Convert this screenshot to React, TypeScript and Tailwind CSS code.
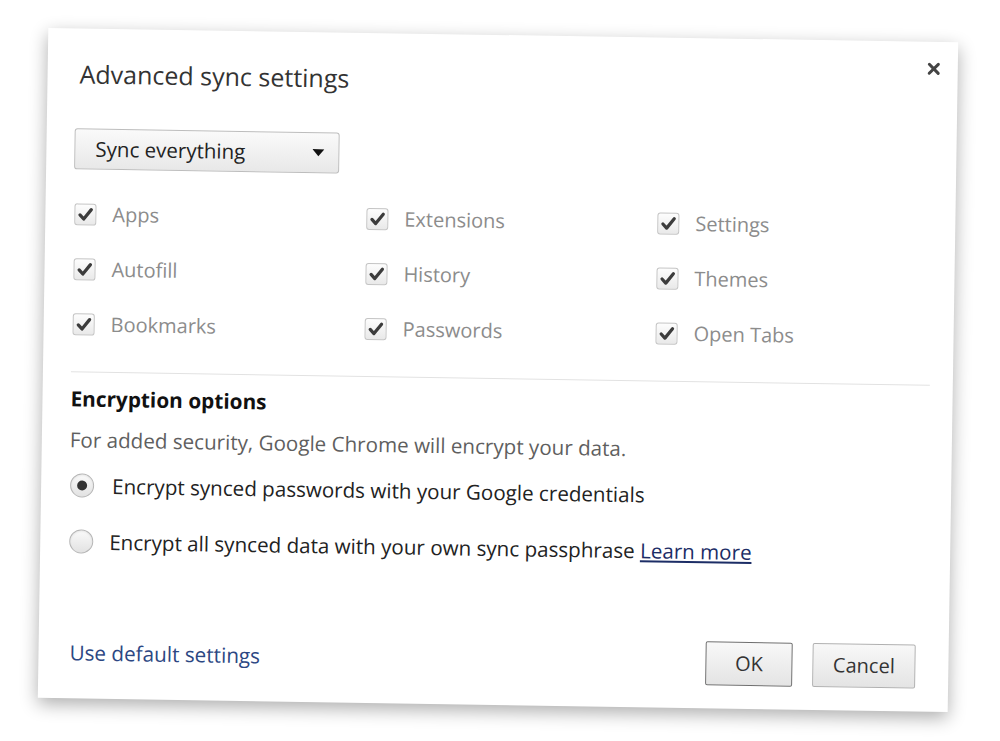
import { X } from "lucide-react"

const font = { fontFamily: '"Open Sans", "Noto Sans", sans-serif' }

const columns = [
  ["Apps", "Autofill", "Bookmarks"],
  ["Extensions", "History", "Passwords"],
  ["Settings", "Themes", "Open Tabs"],
]

function CheckBox() {
  return (
    <span className="flex h-[22px] w-[22px] shrink-0 items-center justify-center rounded-[3px] border border-[#c4c4c4] bg-gradient-to-b from-[#fdfdfd] to-[#e9e9e9]">
      <svg viewBox="0 0 20 20" className="h-[18px] w-[18px]">
        <path d="M4 10.5 L8.2 15 L16.5 4.5" fill="none" stroke="#3c3c3c" strokeWidth="3.6" strokeLinecap="round" strokeLinejoin="round" />
      </svg>
    </span>
  )
}

function Radio({ checked }: { checked?: boolean }) {
  return (
    <span className="flex h-[24px] w-[24px] shrink-0 items-center justify-center rounded-full border border-[#b5b5b5] bg-gradient-to-b from-[#fafafa] to-[#e2e2e2] shadow-[inset_0_1px_2px_rgba(0,0,0,0.08)]">
      {checked && <span className="h-[10px] w-[10px] rounded-full bg-[#333]" />}
    </span>
  )
}

export default function App() {
  return (
    <div className="h-[741px] w-[1000px] overflow-hidden bg-white" style={font}>
      <div className="ml-[43px] mt-[35px] flex h-[670px] w-[910px] rotate-[0.9deg] flex-col bg-white shadow-[0_6px_18px_rgba(0,0,0,0.32)]">
        {/* header */}
        <div className="flex items-start justify-between pl-[32px] pr-[9px] pt-[12px]">
          <h1 className="mt-[18px] text-[25px] leading-[30px] text-[#333]">Advanced sync settings</h1>
          <button className="flex h-[30px] w-[30px] items-center justify-center text-[#444]">
            <X className="h-[18px] w-[18px]" strokeWidth={4} />
          </button>
        </div>

        <div className="flex flex-1 flex-col px-[28px]">
          {/* dropdown */}
          <div className="mt-[40px] flex h-[41px] w-[265px] items-center justify-between rounded-[3px] border border-[#bdbdbd] bg-gradient-to-b from-[#fafafa] to-[#e8e8e8] pl-[20px] pr-[14px] text-[20.5px] text-[#222]">
            <span>Sync everything</span>
            <svg viewBox="0 0 12 8" className="h-[8px] w-[12px]">
              <path d="M0 0 H12 L6 7 Z" fill="#111" />
            </svg>
          </div>

          {/* data types */}
          <div className="mt-[30px] grid grid-cols-[292px_291px_1fr] pl-[1px]">
            {columns.map((col, i) => (
              <div key={i} className="flex flex-col gap-[25px]">
                {col.map((label) => (
                  <label key={label} className="flex h-[30px] items-center gap-[16px] text-[20px] text-[#8c8c8c]">
                    <CheckBox />
                    <span>{label}</span>
                  </label>
                ))}
              </div>
            ))}
          </div>

          <div className="mr-[-5px] mt-[32px] h-px bg-[#e2e2e2]" />

          {/* encryption */}
          <h2 className="mt-[13px] text-[20.8px] font-bold leading-[26px] text-[#111]">Encryption options</h2>
          <p className="mt-[15px] text-[20.6px] leading-[26px] text-[#5f5f5f]">
            For added security, Google Chrome will encrypt your data.
          </p>
          <label className="mt-[20px] flex h-[26px] items-center gap-[18px] pl-[1px] text-[20.6px] text-[#222]">
            <Radio checked />
            <span>Encrypt synced passwords with your Google credentials</span>
          </label>
          <label className="mt-[30px] flex h-[26px] items-center gap-[16px] pl-[1px] text-[20.6px] text-[#222]">
            <Radio />
            <span>
              Encrypt all synced data with your own sync passphrase{" "}
              <a className="text-[#1c2d66] underline">Learn more</a>
            </span>
          </label>

          {/* footer */}
          <div className="mt-auto flex items-center justify-between pb-[23px] pr-[5px]">
            <a className="pl-[3px] text-[20.7px] text-[#2c4783]">Use default settings</a>
            <div className="flex gap-[20px]">
              <button className="h-[44px] w-[87px] rounded-[2px] border border-[#6f6f6f] bg-gradient-to-b from-[#f8f8f8] to-[#e4e4e4] text-[20px] text-[#333]">
                OK
              </button>
              <button className="h-[44px] w-[103px] rounded-[2px] border border-[#b0b0b0] bg-gradient-to-b from-[#f8f8f8] to-[#e4e4e4] text-[20px] text-[#333]">
                Cancel
              </button>
            </div>
          </div>
        </div>
      </div>
    </div>
  )
}
